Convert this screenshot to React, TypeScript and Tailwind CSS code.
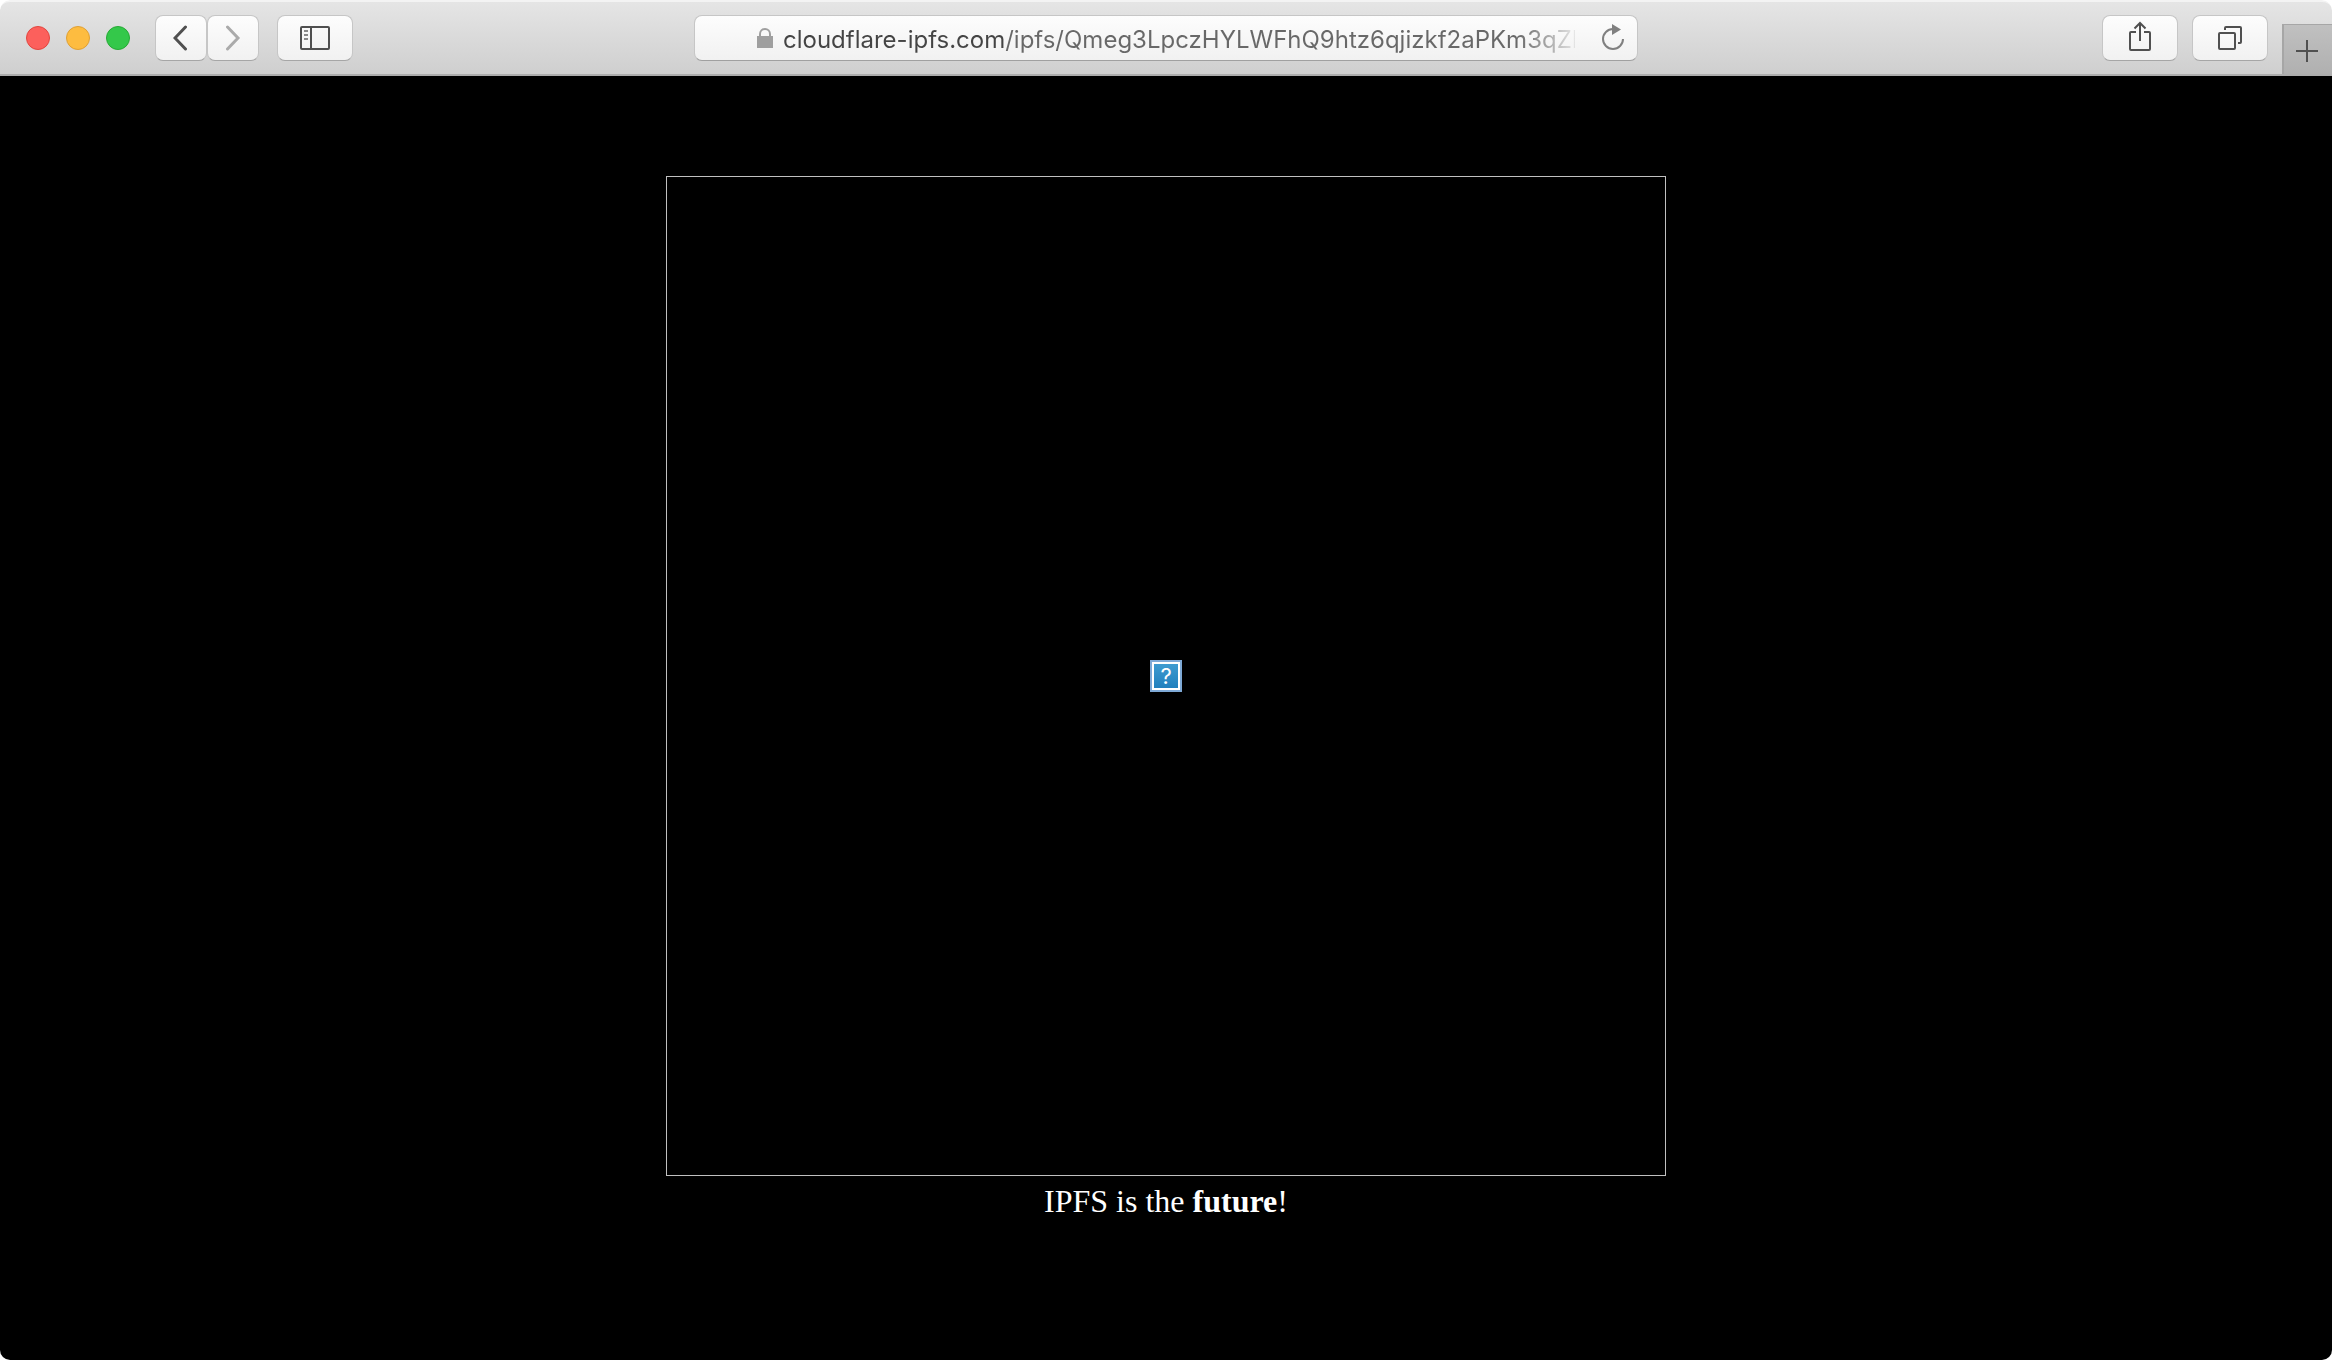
import type { ReactNode } from "react";

const buttonLook =
  "flex h-[46px] items-center justify-center rounded-lg border border-[#c6c6c6] border-b-[#a6a6a6] bg-linear-to-b from-[#fdfdfd] to-[#f1f1f1]";

function ToolbarButton({
  label,
  size,
  disabled,
  children,
}: {
  label: string;
  size: string;
  disabled?: boolean;
  children: ReactNode;
}) {
  return (
    <button type="button" aria-label={label} disabled={disabled} className={`${buttonLook} ${size}`}>
      {children}
    </button>
  );
}

function WindowControls() {
  return (
    <div className="flex gap-4">
      <button type="button" aria-label="Close" className="size-6 rounded-full border border-[#e2463f] bg-[#fc605c]" />
      <button type="button" aria-label="Minimise" className="size-6 rounded-full border border-[#dfa035] bg-[#fdbc40]" />
      <button type="button" aria-label="Zoom" className="size-6 rounded-full border border-[#27aa35] bg-[#34c84a]" />
    </div>
  );
}

function Toolbar() {
  return (
    <header className="grid h-[76px] grid-cols-[1fr_minmax(0,944px)_1fr] rounded-t-[10px] border-t-2 border-b-2 border-t-[#f3f3f3] border-b-[#adadad] bg-linear-to-b from-[#e5e5e5] to-[#cfcfcf]">
      <div className="flex items-center pl-[26px]">
        <WindowControls />
        <nav aria-label="History" className="ml-[25px] flex">
          <ToolbarButton label="Back" size="w-[52px]">
            <svg width="16" height="26" viewBox="0 0 16 26" fill="none" stroke="#505050" strokeWidth="3" strokeLinecap="round" strokeLinejoin="miter">
              <path d="M12.5 2 L2 13 L12.5 24" />
            </svg>
          </ToolbarButton>
          <ToolbarButton label="Forward" size="w-[52px]" disabled>
            <svg width="16" height="26" viewBox="0 0 16 26" fill="none" stroke="#aaaaaa" strokeWidth="3" strokeLinecap="round" strokeLinejoin="miter">
              <path d="M2.5 2 L13 13 L2.5 24" />
            </svg>
          </ToolbarButton>
        </nav>
        <div className="ml-[18px]">
          <ToolbarButton label="Show sidebar" size="w-[76px]">
            <svg width="30" height="24" viewBox="0 0 30 24" fill="none" stroke="#505050" strokeWidth="2">
              <rect x="1" y="1" width="28" height="22" rx="1" />
              <path d="M11 1 V23" />
              <path d="M4 5 H8 M4 9 H8 M4 13 H8" stroke="#8a8a8a" />
            </svg>
          </ToolbarButton>
        </div>
      </div>

      <form
        onSubmit={(event) => event.preventDefault()}
        className="flex h-[46px] items-center self-center rounded-lg border border-[#c6c6c6] border-b-[#a0a0a0] bg-linear-to-b from-[#fdfdfd] to-[#f1f1f1] pr-3 pl-[62px]"
      >
        <svg width="16" height="22" viewBox="0 0 16 22" className="shrink-0" aria-hidden="true">
          <rect y="9" width="16" height="12" fill="#9f9f9f" />
          <path d="M3 10 V7 a5 5 0 0 1 10 0 V10" fill="none" stroke="#9f9f9f" strokeWidth="2" />
        </svg>
        <input
          type="text"
          aria-label="Address"
          spellCheck={false}
          defaultValue="cloudflare-ipfs.com/ipfs/Qmeg3LpczHYLWFhQ9htz6qjizkf2aPKm3qZE"
          className="ml-[10px] h-10 w-0 max-w-[792px] grow bg-linear-[90deg,#444_222px,#686868_222px,#686868_735px,transparent_800px] bg-clip-text pt-0.5 font-[Inter,sans-serif] text-2xl text-transparent outline-none"
        />
        <button type="button" aria-label="Reload" className="ml-auto shrink-0">
          <svg width="24" height="28" viewBox="0 0 24 28" className="mb-1">
            <path d="M12 7 A10 10 0 1 0 22 17" fill="none" stroke="#808080" strokeWidth="2" />
            <path d="M11 2 L20 7.5 L11 13 Z" fill="#808080" />
          </svg>
        </button>
      </form>

      <div className="flex items-center justify-end">
        <div className="flex gap-[14px]">
          <ToolbarButton label="Share" size="w-[76px]">
            <svg width="24" height="32" viewBox="0 0 24 32" fill="none" stroke="#505050" strokeWidth="2" className="mb-1">
              <path d="M8 12 H3 a1 1 0 0 0 -1 1 V29 a1 1 0 0 0 1 1 H21 a1 1 0 0 0 1 -1 V13 a1 1 0 0 0 -1 -1 H16" />
              <path d="M12 21 V3" />
              <path d="M6.5 8.5 L12 3 L17.5 8.5" />
            </svg>
          </ToolbarButton>
          <ToolbarButton label="Show all tabs" size="w-[76px]">
            <svg width="24" height="24" viewBox="0 0 24 24" fill="none" stroke="#505050" strokeWidth="2">
              <rect x="1" y="7" width="16" height="16" rx="1" />
              <path d="M7 4 V2 a1 1 0 0 1 1 -1 H22 a1 1 0 0 1 1 1 V16 a1 1 0 0 1 -1 1 H20" />
            </svg>
          </ToolbarButton>
        </div>
        <button
          type="button"
          aria-label="New tab"
          className="ml-[14px] flex h-[50px] w-[50px] items-center justify-center self-end border-t border-l-2 border-[#a6a6a6] bg-linear-to-b from-[#c0c0c0] to-[#b0b0b0] pr-0.5"
        >
          <svg width="22" height="22" viewBox="0 0 22 22" stroke="#505050" strokeWidth="2" className="mt-0.5">
            <path d="M11 0 V22 M0 11 H22" />
          </svg>
        </button>
      </div>
    </header>
  );
}

function MissingImage() {
  return (
    <div
      role="img"
      aria-label="Missing image"
      className="flex aspect-square w-full max-w-[1000px] items-center justify-center border border-[#c0c0c0]"
    >
      <span className="flex size-8 items-center justify-center border-2 border-[#7ea9d6] bg-white p-[2px]">
        <span className="flex size-6 items-center justify-center bg-linear-to-b from-[#3d9bd0] to-[#2180bd] font-[Inter,sans-serif] text-[22px] leading-6 text-white">
          ?
        </span>
      </span>
    </div>
  );
}

export default function App() {
  return (
    <div className="min-h-screen bg-white">
      <div className="flex min-h-screen flex-col overflow-hidden rounded-[10px]">
        <Toolbar />
        <main className="flex grow flex-col items-center bg-black pt-[100px] text-white">
          <MissingImage />
          <p className="mt-1 font-['Liberation_Serif',serif] text-[32px] leading-[42px]">
            IPFS is the <b>future</b>!
          </p>
        </main>
      </div>
    </div>
  );
}
